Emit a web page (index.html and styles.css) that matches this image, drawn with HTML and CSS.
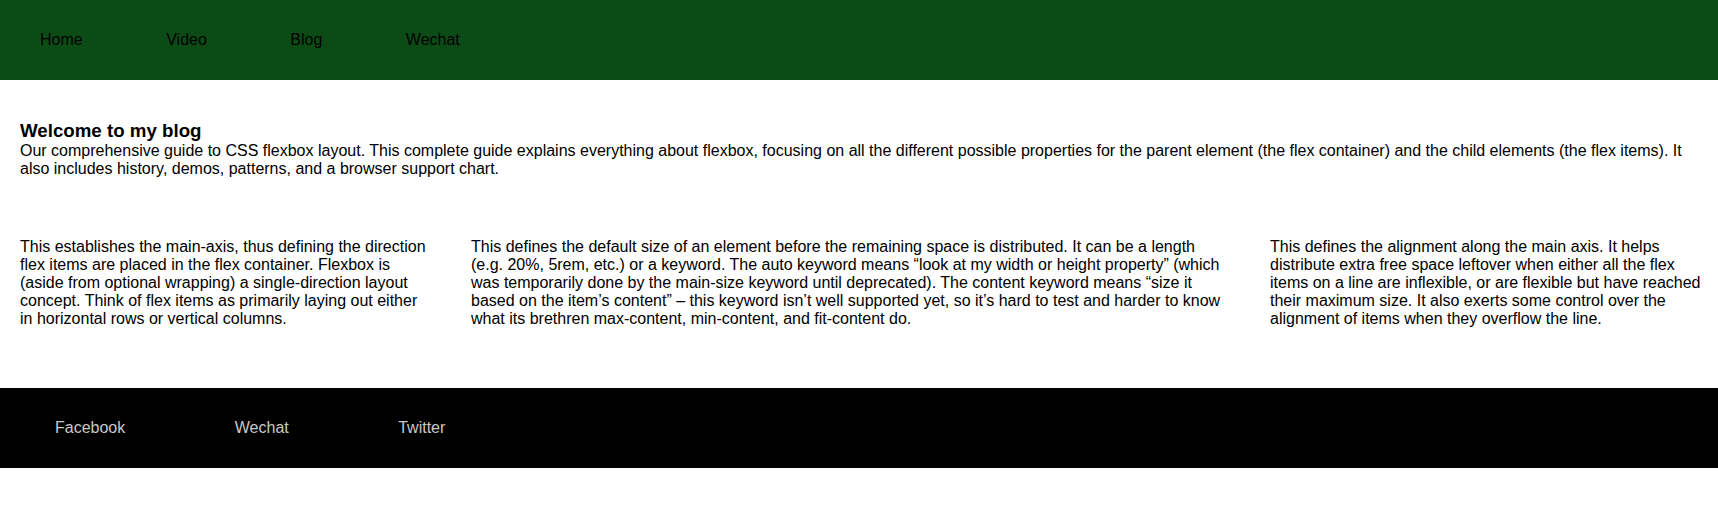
FILE: index.html
```html
<!DOCTYPE html>
<html lang="en">
<head>
<meta charset="utf-8">
<title>Blog</title>
<link rel="stylesheet" href="styles.css">
</head>
<body>
<header class="site-header">
  <ul class="nav">
    <li class="nav-item">Home</li>
    <li class="nav-item">Video</li>
    <li class="nav-item">Blog</li>
    <li class="nav-item">Wechat</li>
  </ul>
</header>
<section class="intro">
  <h3 class="intro-title">Welcome to my blog</h3>
  <p class="intro-text">Our comprehensive guide to CSS flexbox layout. This complete guide explains everything about flexbox, focusing on all the different possible properties for the parent element (the flex container) and the child elements (the flex items). It also includes history, demos, patterns, and a browser support chart.</p>
</section>
<section class="columns">
  <div class="col col-a">This establishes the main-axis, thus defining the direction flex items are placed in the flex container. Flexbox is (aside from optional wrapping) a single-direction layout concept. Think of flex items as primarily laying out either in horizontal rows or vertical columns.</div>
  <div class="col col-b">This defines the default size of an element before the remaining space is distributed. It can be a length (e.g. 20%, 5rem, etc.) or a keyword. The auto keyword means “look at my width or height property” (which was temporarily done by the main-size keyword until deprecated). The content keyword means “size it based on the item’s content” – this keyword isn’t well supported yet, so it’s hard to test and harder to know what its brethren max-content, min-content, and fit-content do.</div>
  <div class="col col-c">This defines the alignment along the main axis. It helps distribute extra free space leftover when either all the flex items on a line are inflexible, or are flexible but have reached their maximum size. It also exerts some control over the alignment of items when they overflow the line.</div>
</section>
<footer class="site-footer">
  <ul class="links">
    <li class="link-item">Facebook</li>
    <li class="link-item">Wechat</li>
    <li class="link-item">Twitter</li>
  </ul>
</footer>
</body>
</html>
```
FILE: styles.css
```css
* { box-sizing: border-box; }
html, body { margin: 0; padding: 0; }
body {
  font-family: "Liberation Sans", Arial, sans-serif;
  font-size: 16px;
  color: #000;
  background: #fff;
}
.site-header {
  background: #0c4b16;
  height: 80px;
  display: flex;
  align-items: center;
}
.nav, .links {
  list-style: none;
  margin: 0;
  padding: 0;
  display: flex;
  gap: 3.5px;
}
.nav-item { padding: 0 40px; color: #000; }
.intro { padding: 40px 20px; }
.intro-title {
  margin: 0;
  font-size: 18.72px;
  font-weight: bold;
}
.intro-text { margin: 0; }
.columns {
  display: flex;
  padding: 20px 0 60px;
}
.col { padding: 0 20px; }
.col-a { flex: 0 0 451px; }
.col-b { flex: 0 0 799px; padding-right: 25px; }
.col-c { flex: 1 1 0; padding-right: 12px; }
.site-footer {
  background: #000;
  height: 80px;
  display: flex;
  align-items: center;
  padding-left: 2px;
}
.link-item { padding: 0 53px; color: #c8c8c8; }
```
